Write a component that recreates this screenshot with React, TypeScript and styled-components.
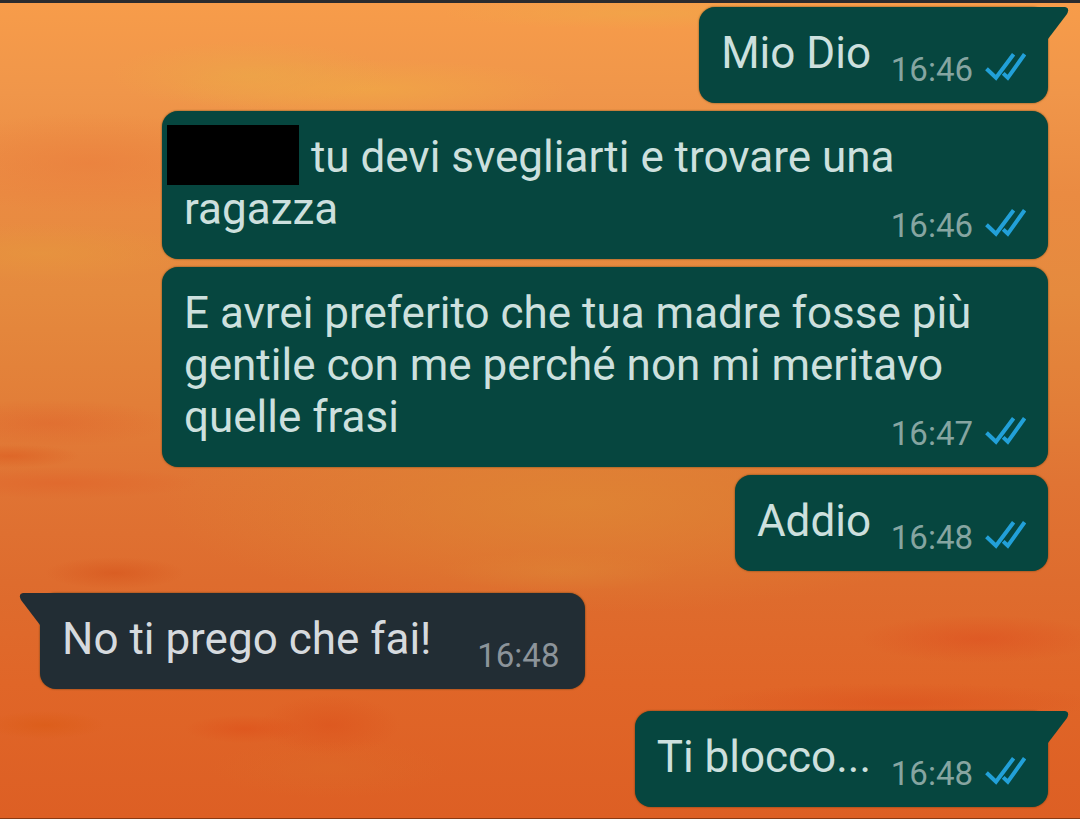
import React from 'react';
import styled, { createGlobalStyle } from 'styled-components';

const GlobalStyle = createGlobalStyle`
  *, *::before, *::after { box-sizing: border-box; }
  body { margin: 0; background: #de6026; }
`;

const Screen = styled.main`
  display: flex;
  flex-direction: column;
  min-height: 100vh;
  border-top: 3px solid #2b2b2e;
  border-bottom: 1px solid #8a3a14;
  font-family: Roboto, 'Liberation Sans', sans-serif;
  background:
    radial-gradient(ellipse 140px 34px at 250px 72px, rgba(236, 166, 72, 0.7), transparent),
    radial-gradient(ellipse 200px 30px at 370px 86px, rgba(240, 168, 70, 0.7), transparent),
    radial-gradient(ellipse 200px 16px at 640px 10px, rgba(240, 166, 72, 0.7), transparent),
    radial-gradient(ellipse 180px 50px at 90px 160px, rgba(234, 124, 60, 0.6), transparent),
    radial-gradient(ellipse 160px 30px at 40px 250px, rgba(230, 150, 62, 0.7), transparent),
    radial-gradient(ellipse 120px 24px at 50px 420px, rgba(224, 100, 44, 0.5), transparent),
    radial-gradient(ellipse 70px 12px at 10px 453px, rgba(220, 92, 32, 0.6), transparent),
    radial-gradient(ellipse 140px 16px at 60px 480px, rgba(224, 96, 40, 0.5), transparent),
    radial-gradient(ellipse 70px 16px at 115px 570px, rgba(214, 84, 28, 0.6), transparent),
    radial-gradient(ellipse 420px 110px at 580px 500px, rgba(222, 136, 52, 0.75), transparent),
    radial-gradient(ellipse 120px 20px at 560px 568px, rgba(222, 132, 54, 0.5), transparent),
    radial-gradient(ellipse 120px 24px at 980px 636px, rgba(222, 80, 32, 0.6), transparent),
    radial-gradient(ellipse 200px 20px at 900px 700px, rgba(220, 82, 30, 0.6), transparent),
    radial-gradient(ellipse 60px 14px at 245px 726px, rgba(222, 80, 26, 0.6), transparent),
    radial-gradient(ellipse 70px 30px at 330px 722px, rgba(220, 82, 28, 0.6), transparent),
    radial-gradient(ellipse 60px 14px at 45px 722px, rgba(218, 90, 20, 0.6), transparent),
    radial-gradient(ellipse 120px 30px at 330px 765px, rgba(220, 106, 40, 0.5), transparent),
    linear-gradient(#f79c4a 0, #f0964a 90px, #ea8b42 190px, #e58a3e 290px, #e27e38 400px, #e07434 480px, #de6c2e 580px, #e06628 680px, #dd5f24 100%);
`;

const Messages = styled.ol`
  display: flex;
  flex-direction: column;
  gap: 8px;
  margin: 0;
  padding: 4px 32px 11px 40px;
  list-style: none;
`;

const Message = styled.li<{ $incoming?: boolean; $spaced?: boolean }>`
  position: relative;
  display: grid;
  align-self: ${(p) => (p.$incoming ? 'flex-start' : 'flex-end')};
  margin-top: ${(p) => (p.$spaced ? 14 : 0)}px;
  margin-left: ${(p) => (p.$incoming ? 0 : 122)}px;
  margin-right: ${(p) => (p.$incoming ? 122 : 0)}px;
  padding: 0 ${(p) => (p.$incoming ? 26 : 22)}px 0 22px;
  border-radius: 16px;
  background: ${(p) => (p.$incoming ? '#222d34' : '#06463f')};
  color: ${(p) => (p.$incoming ? '#d6dade' : '#cde0de')};
  box-shadow: 0 0 2px rgba(60, 50, 10, 0.8);
`;

const Text = styled.p`
  grid-area: 1 / 1;
  margin: 0;
  padding: 20px 0 24px;
  font-size: 44px;
  line-height: 52px;
`;

const MetaSpace = styled.span<{ $incoming?: boolean }>`
  display: inline-block;
  width: ${(p) => (p.$incoming ? 128 : 155)}px;
  height: 1px;
`;

const Meta = styled.div<{ $incoming?: boolean }>`
  grid-area: 1 / 1;
  place-self: end;
  display: flex;
  align-items: center;
  gap: 12px;
  padding-bottom: 13px;
  font-size: 33px;
  line-height: 40px;
  color: ${(p) => (p.$incoming ? '#8c949a' : '#86a5a1')};
`;

const Redacted = styled.span`
  display: inline-block;
  width: 132px;
  height: 60px;
  margin: -6px 1px -2px -17px;
  vertical-align: top;
  background: #000;
`;

const TailShape = styled.svg<{ $incoming?: boolean }>`
  position: absolute;
  top: 0;
  ${(p) => (p.$incoming ? 'right: 100%; margin-right: -17px; transform: scaleX(-1);' : 'left: 100%; margin-left: -17px;')}
`;

const ChecksIcon = styled.svg`
  margin-bottom: 6px;
`;

const Checks = () => (
  <ChecksIcon width="41" height="28" viewBox="0 0 41 28" fill="none" stroke="#22a0d8" strokeWidth="4" role="img" aria-label="Letto">
    <path d="M1.5 15.8 L11 24.8 L28.6 1.2" />
    <path d="M18.2 20.4 L22.8 24.8 L39.6 1.2" />
  </ChecksIcon>
);

const Tail = ({ incoming }: { incoming?: boolean }) => (
  <TailShape $incoming={incoming} width="38" height="34" viewBox="0 0 38 34" aria-hidden="true">
    <path d="M0 0 H34 Q39 1 36 7 L17 32 H0 Z" fill={incoming ? '#222d34' : '#06463f'} />
  </TailShape>
);

type BubbleProps = {
  time: string;
  incoming?: boolean;
  spaced?: boolean;
  tail?: boolean;
  children: React.ReactNode;
};

const Bubble = ({ time, incoming, spaced, tail, children }: BubbleProps) => (
  <Message $incoming={incoming} $spaced={spaced}>
    {tail && <Tail incoming={incoming} />}
    <Text>
      {children}
      <MetaSpace $incoming={incoming} />
    </Text>
    <Meta $incoming={incoming}>
      <time>{time}</time>
      {!incoming && <Checks />}
    </Meta>
  </Message>
);

export default function App() {
  return (
    <>
      <GlobalStyle />
      <Screen>
        <Messages>
          <Bubble time="16:46" tail>Mio Dio</Bubble>
          <Bubble time="16:46">
            <Redacted /> tu devi svegliarti e trovare una ragazza
          </Bubble>
          <Bubble time="16:47">
            E avrei preferito che tua madre fosse più gentile con me perché non mi meritavo quelle frasi
          </Bubble>
          <Bubble time="16:48">Addio</Bubble>
          <Bubble time="16:48" incoming spaced tail>No ti prego che fai!</Bubble>
          <Bubble time="16:48" spaced tail>Ti blocco...</Bubble>
        </Messages>
      </Screen>
    </>
  );
}
